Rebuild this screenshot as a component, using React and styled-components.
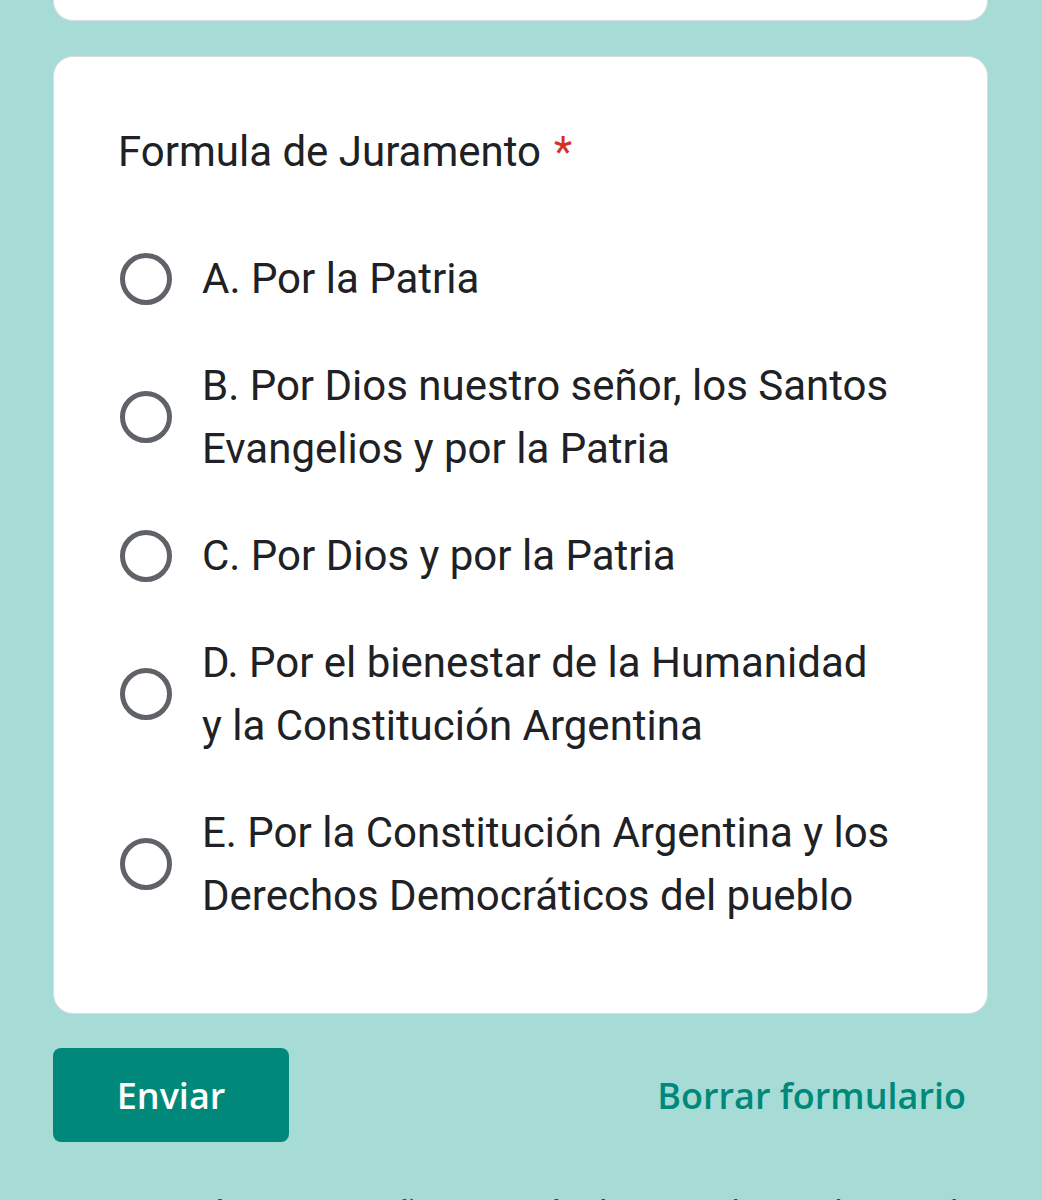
import styled, { createGlobalStyle } from "styled-components"

const GlobalStyle = createGlobalStyle`
  html, body {
    margin: 0;
    padding: 0;
    background: #a6dcd5;
  }
  body {
    font-family: Roboto, "Liberation Sans", sans-serif;
    color: #202124;
  }
`

const Page = styled.main`
  padding: 0 54px 0 53px;
  height: 1200px;
  overflow: hidden;
`

const PreviousCard = styled.div`
  height: 20px;
  background: #fff;
  border: 1.5px solid #dadce0;
  border-top: none;
  border-radius: 0 0 20px 20px;
`

const Card = styled.section`
  margin-top: 35px;
  background: #fff;
  border: 1.5px solid #dadce0;
  border-radius: 20px;
  padding: 64px 64px 86px 64px;
`

const Title = styled.h2`
  margin: 0 0 64px;
  font-size: 42px;
  font-weight: 400;
  line-height: 62px;
  .required {
    color: #d93025;
    margin-left: 13px;
  }
`

const Options = styled.ul`
  list-style: none;
  margin: 0;
  padding: 0;
  display: flex;
  flex-direction: column;
  gap: 44px;
`

const Option = styled.li`
  display: flex;
  align-items: center;
  gap: 30px;
`

const Radio = styled.span`
  flex: none;
  width: 42px;
  height: 42px;
  margin-left: 2px;
  border: 5px solid #5f6368;
  border-radius: 50%;
`

const Label = styled.span`
  max-width: 690px;
  font-size: 42px;
  line-height: 63px;
`

const Actions = styled.div`
  margin-top: 34px;
  display: flex;
  align-items: center;
  justify-content: space-between;
`

const Button = styled.button`
  border: none;
  cursor: pointer;
  font-family: "Open Sans", Lato, sans-serif;
  font-size: 36px;
  font-weight: 600;
  border-radius: 8px;
  height: 94px;
  padding: 0 ${({ $primary }) => ($primary ? "0" : "22px")};
  width: ${({ $primary }) => ($primary ? "236px" : "auto")};
  background: ${({ $primary }) => ($primary ? "#00897b" : "transparent")};
  color: ${({ $primary }) => ($primary ? "#fff" : "#00897b")};
`

const Notice = styled.p`
  margin: 46px 0 0;
  font-size: 34px;
  line-height: 48px;
  color: #3c4043;
  white-space: nowrap;
`

export default function App() {
  const options = [
    "A. Por la Patria",
    "B. Por Dios nuestro señor, los Santos Evangelios y por la Patria",
    "C. Por Dios y por la Patria",
    "D. Por el bienestar de la Humanidad y la Constitución Argentina",
    "E. Por la Constitución Argentina y los Derechos Democráticos del pueblo"
  ]
  return (
    <>
      <GlobalStyle />
      <Page>
        <PreviousCard />
        <Card>
          <Title>
            Formula de Juramento<span className="required">*</span>
          </Title>
          <Options role="radiogroup">
            {options.map(text => (
              <Option key={text} role="radio" aria-checked="false">
                <Radio />
                <Label>{text}</Label>
              </Option>
            ))}
          </Options>
        </Card>
        <Actions>
          <Button $primary>Enviar</Button>
          <Button>Borrar formulario</Button>
        </Actions>
        <Notice>Nunca envíes contraseñas a través de Formularios de Google.</Notice>
      </Page>
    </>
  )
}
